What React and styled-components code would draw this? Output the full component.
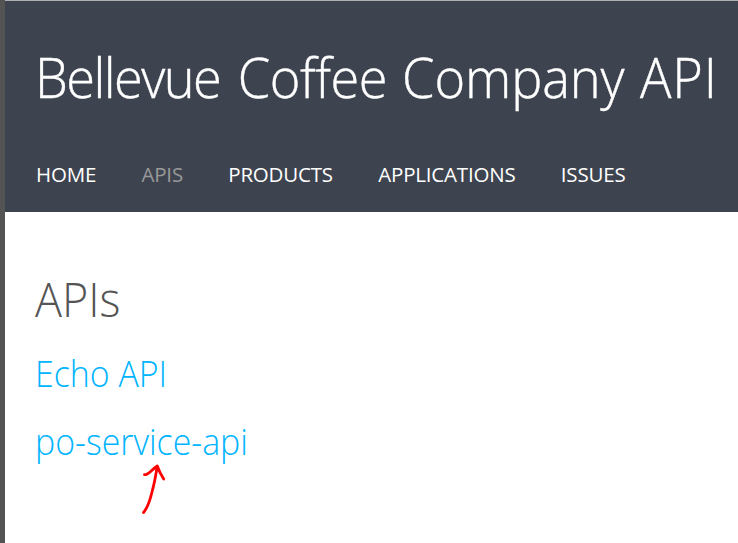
import React from 'react';
import styled, { createGlobalStyle } from 'styled-components';

const GlobalStyle = createGlobalStyle`
  * { box-sizing: border-box; }
  body { margin: 0; background: #fff; font-family: "Open Sans", "Noto Sans", sans-serif; }
`;
const Page = styled.div`
  height: 543px;
  border-left: 5px solid #545454;
  overflow: hidden;
  position: relative;
`;
const TopEdge = styled.div`
  height: 1px;
  background: #b0b0b0;
`;
const Header = styled.header`
  height: 211px;
  background: #3e444f;
  padding-left: 30px;
`;
const Title = styled.h1`
  margin: 0;
  padding: 38px 0 0;
  font-weight: 300;
  font-size: 54.5px;
  line-height: 76px;
  color: #fff;
  -webkit-text-stroke: 0.4px #fff;
  white-space: nowrap;
  width: max-content;
  transform: scaleX(0.96);
  transform-origin: left;
`;
const Word = styled.span`
  letter-spacing: ${p => p.$tracking}px;
  margin-right: ${p => p.$gap}px;
`;
const Nav = styled.nav`
  display: flex;
  gap: 45.3px;
  margin: 42px 0 0 1px;
`;
const NavLink = styled.a`
  font-size: 20.5px;
  line-height: 34px;
  letter-spacing: -0.19px;
  color: ${p => (p.$active ? '#999' : '#fff')};
`;
const Main = styled.main`
  padding: 55px 30px;
  font-weight: 300;
`;
const Heading = styled.h2`
  margin: 0;
  font-weight: 300;
  font-size: 47px;
  line-height: 64px;
  color: #555;
  width: max-content;
  transform: scaleX(0.955);
  transform-origin: left;
`;
const ApiLink = styled.a`
  display: block;
  font-size: 36px;
  line-height: 50px;
  margin-top: 18px;
  color: #00b4ff;
  width: max-content;
  transform: scaleX(0.94);
  transform-origin: left;
`;
const Arrow = styled.svg`
  position: absolute;
  left: 135px;
  top: 460px;
  fill: none;
  stroke: #f00;
  stroke-width: 2.8;
  stroke-linecap: round;
  stroke-linejoin: round;
`;

const navItems = ['HOME', 'APIS', 'PRODUCTS', 'APPLICATIONS', 'ISSUES'];
const apis = ['Echo API', 'po-service-api'];

export default function App() {
  return (
    <Page>
      <GlobalStyle />
      <TopEdge />
      <Header>
        <Title>
          <Word $tracking={-1.6} $gap={4}>Bellevue</Word>{' '}
          <Word $tracking={-0.5} $gap={1.6}>Coffee</Word>{' '}
          <Word $tracking={-0.1} $gap={2}>Company</Word>{' '}
          <Word $tracking={0.8} $gap={0}>API</Word>
        </Title>
        <Nav>
          {navItems.map(item => (
            <NavLink key={item} $active={item === 'APIS'}>{item}</NavLink>
          ))}
        </Nav>
      </Header>
      <Main>
        <Heading>APIs</Heading>
        {apis.map(name => <ApiLink key={name}>{name}</ApiLink>)}
      </Main>
      <Arrow width="30" height="60" viewBox="140 460 30 60">
        <path d="M143.5 512.5C149 506 150.5 498 152.5 490C154.5 483 156 474 157.3 466M144.5 474.7C148.5 475 151 470 157.3 466C159 471 161 475 163.7 479" />
      </Arrow>
    </Page>
  );
}
